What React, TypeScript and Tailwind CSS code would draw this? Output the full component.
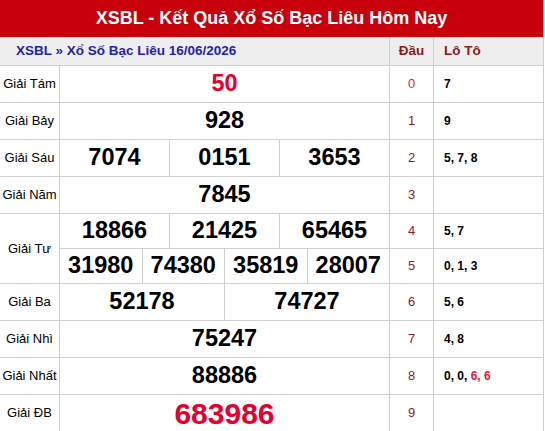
import React from "react";

type Row = {
  label: string;
  nums: string[][];
  red?: boolean;
  big?: boolean;
  dau: string[];
  loto: React.ReactNode[];
};

const rows: Row[] = [
  { label: "Giải Tám", nums: [["50"]], red: true, dau: ["0"], loto: ["7"] },
  { label: "Giải Bảy", nums: [["928"]], dau: ["1"], loto: ["9"] },
  { label: "Giải Sáu", nums: [["7074", "0151", "3653"]], dau: ["2"], loto: ["5, 7, 8"] },
  { label: "Giải Năm", nums: [["7845"]], dau: ["3"], loto: [""] },
  {
    label: "Giải Tư",
    nums: [
      ["18866", "21425", "65465"],
      ["31980", "74380", "35819", "28007"],
    ],
    dau: ["4", "5"],
    loto: ["5, 7", "0, 1, 3"],
  },
  { label: "Giải Ba", nums: [["52178", "74727"]], dau: ["6"], loto: ["5, 6"] },
  { label: "Giải Nhì", nums: [["75247"]], dau: ["7"], loto: ["4, 8"] },
  {
    label: "Giải Nhất",
    nums: [["88886"]],
    dau: ["8"],
    loto: [
      <span key="a">
        0, 0, <span className="text-[#e5173f]">6, 6</span>
      </span>,
    ],
  },
  { label: "Giải ĐB", nums: [["683986"]], red: true, big: true, dau: ["9"], loto: [""] },
];

export default function App() {
  return (
    <div
      className="w-[544px] bg-white border-r border-[#cfcfcf] text-black"
      style={{ fontFamily: '"Liberation Sans", Arial, sans-serif' }}
    >
      <div className="h-[37px] bg-[#c8000b] flex items-center justify-center text-white font-bold text-[18px]">
        XSBL - Kết Quả Xổ Số Bạc Liêu Hôm Nay
      </div>
      <div className="flex h-[29px] bg-[#eeeeee] border-b border-[#cfcfcf] text-[13.5px] font-bold">
        <div className="w-[390px] border-r border-[#cfcfcf] flex items-center pl-[16px] text-[#2424a8]">
          XSBL » Xổ Số Bạc Liêu 16/06/2026
        </div>
        <div className="w-[44px] border-r border-[#cfcfcf] flex items-center justify-center text-[#8a1c1c]">
          Đầu
        </div>
        <div className="flex-1 flex items-center pl-[10px] text-[#8a1c1c]">Lô Tô</div>
      </div>
      {rows.map((r) => {
        const sub = r.nums.length;
        const h = sub > 1 ? "h-[35px]" : "h-[37px]";
        return (
          <div key={r.label} className="flex">
            <div className="w-[60px] shrink-0 border-r border-b border-[#cfcfcf] flex items-center justify-center text-[13px] whitespace-nowrap">
              {r.label}
            </div>
            <div className="flex-1 flex flex-col">
              {r.nums.map((line, i) => (
                <div key={i} className={`flex ${h}`}>
                  <div className="w-[330px] flex border-r border-b border-[#cfcfcf]">
                    {line.map((n, j) => (
                      <div
                        key={j}
                        className={`flex-1 flex items-center justify-center font-bold ${
                          j > 0 ? "border-l border-[#cfcfcf]" : ""
                        } ${r.big ? "text-[30px]" : "text-[23.5px]"} ${
                          r.red ? "text-[#e6002e]" : "text-black"
                        }`}
                      >
                        {n}
                      </div>
                    ))}
                  </div>
                  <div
                    className={`w-[44px] border-r border-b border-[#cfcfcf] flex items-center justify-center text-[13px] ${
                      r.dau[i] === "0" ? "text-[#e5173f]" : "text-[#8a1c2a]"
                    }`}
                  >
                    {r.dau[i]}
                  </div>
                  <div className="flex-1 border-b border-[#cfcfcf] flex items-center pl-[10px] text-[12px] font-bold">
                    {r.loto[i]}
                  </div>
                </div>
              ))}
            </div>
          </div>
        );
      })}
    </div>
  );
}
